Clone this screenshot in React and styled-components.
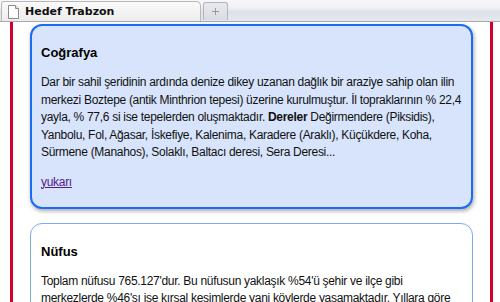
import React from 'react'
import styled, { createGlobalStyle } from 'styled-components'

const GlobalStyle = createGlobalStyle`
  html, body {
    margin: 0;
    padding: 0;
    background: #fff;
    overflow: hidden;
  }
  body {
    font-family: Arial, "Liberation Sans", sans-serif;
  }
`

const sections = [
  {
    id: 'cografya',
    title: 'Coğrafya',
    active: true,
    body: (
      <>
        Dar bir sahil şeridinin ardında denize dikey uzanan dağlık bir araziye sahip olan ilin
        <br />
        merkezi Boztepe (antik Minthrion tepesi) üzerine kurulmuştur. İl topraklarının % 22,4
        <br />
        yayla, % 77,6 si ise tepelerden oluşmaktadır. <b>Dereler</b> Değirmendere (Piksidis),
        <br />
        Yanbolu, Fol, Ağasar, İskefiye, Kalenima, Karadere (Araklı), Küçükdere, Koha,
        <br />
        Sürmene (Manahos), Solaklı, Baltacı deresi, Sera Deresi...
      </>
    ),
  },
  {
    id: 'nufus',
    title: 'Nüfus',
    body: (
      <>
        Toplam nüfusu 765.127'dur. Bu nüfusun yaklaşık %54'ü şehir ve ilçe gibi
        <br />
        merkezlerde %46'sı ise kırsal kesimlerde yani köylerde yaşamaktadır. Yıllara göre
        <br />
        nüfus artış hızı değişiklik göstermektedir.
      </>
    ),
  },
]

const Browser = () => (
  <TabBar>
    <Tab>
      <PageIcon width="11" height="14" viewBox="0 0 11 14">
        <path d="M0.5 0.5h7l3 3v10h-10z" fill="#fff" stroke="#8a8a8a" />
        <path d="M7.5 0.5v3h3" fill="#eee" stroke="#8a8a8a" />
      </PageIcon>
      Hedef Trabzon
    </Tab>
    <NewTab>
      <svg width="7" height="7" viewBox="0 0 7 7">
        <path d="M3.5 0v7M0 3.5h7" stroke="#9a9a9a" strokeWidth="1" />
      </svg>
    </NewTab>
  </TabBar>
)

const App = () => (
  <>
    <GlobalStyle />
    <Browser />
    <Page>
      {sections.map((s) => (
        <Card key={s.id} id={s.id} $active={s.active}>
          <Title>{s.title}</Title>
          <Text>{s.body}</Text>
          {s.active && <TopLink href="#top">yukarı</TopLink>}
        </Card>
      ))}
    </Page>
  </>
)

export default App

const TabBar = styled.div`
  display: flex;
  align-items: flex-end;
  gap: 2px;
  height: 21px;
  padding-left: 1px;
  background: linear-gradient(#f7f7fa 0%, #f1f2f6 35%, #dfe1ea 55%, #e6e8ef 100%);
  border-bottom: 1px solid #a9a9ad;
`

const Tab = styled.div`
  display: flex;
  align-items: center;
  gap: 6px;
  width: 186px;
  height: 19px;
  padding: 0 6px;
  background: linear-gradient(#fafafa, #ececec);
  border: 1px solid #b8b8bc;
  border-bottom: none;
  border-radius: 3px 5px 0 0;
  font-family: "DejaVu Sans", Verdana, sans-serif;
  font-size: 11px;
  font-weight: bold;
  color: #111;
`

const PageIcon = styled.svg`
  flex: none;
  margin-top: 1px;
`

const NewTab = styled.div`
  display: flex;
  align-items: center;
  justify-content: center;
  width: 23px;
  height: 17px;
  margin-bottom: 1px;
  background: linear-gradient(#e9eaee, #d9dbe3);
  border: 1px solid #b4b5bb;
  border-bottom: none;
  border-radius: 3px 3px 0 0;
`

const Page = styled.div`
  display: flex;
  flex-direction: column;
  gap: 14px;
  width: 443px;
  min-height: 300px;
  margin-left: 10px;
  padding: 2px 17px 0;
  border-left: 3px solid #d4002b;
  border-right: 3px solid #d4002b;
`

const Card = styled.section`
  padding: ${(p) => (p.$active ? '18px 9px 16px' : '19px 10px 16px')};
  background: ${(p) => (p.$active ? '#d7e4fb' : '#fff')};
  border: ${(p) => (p.$active ? '2px solid #1a6cf7' : '1px solid #7eaaf0')};
  border-radius: 12px;
  box-shadow: ${(p) => (p.$active ? '1px 2px 4px rgba(0, 0, 0, 0.35)' : 'none')};
`

const Title = styled.h2`
  margin: 0 0 12px;
  font-size: 13px;
  line-height: 18px;
  font-weight: bold;
  color: #000;
`

const Text = styled.p`
  margin: 0 0 10px;
  font-size: 12px;
  line-height: 17.5px;
  letter-spacing: -0.3px;
  white-space: nowrap;
  color: #111;

  b {
    font-weight: bold;
  }
`

const TopLink = styled.a`
  display: inline-block;
  font-size: 12px;
  line-height: 18px;
  letter-spacing: -0.3px;
  color: #551a8b;
  text-decoration: underline;
`
